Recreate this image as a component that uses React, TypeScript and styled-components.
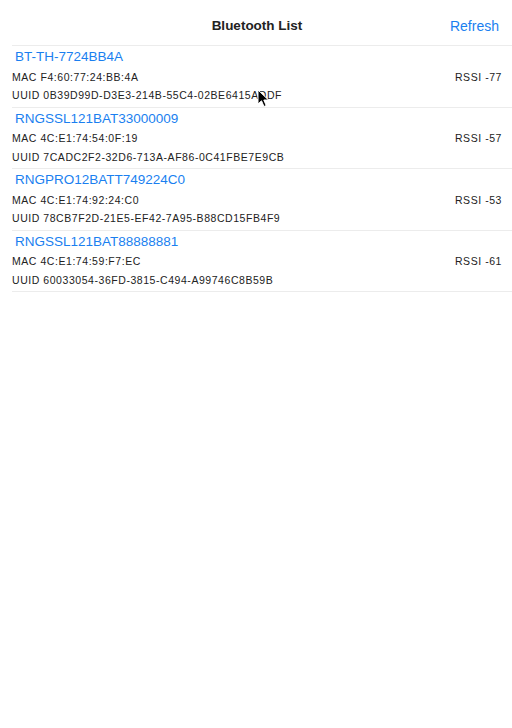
import React from "react";
import styled, { createGlobalStyle } from "styled-components";

const Global = createGlobalStyle`
  html, body { margin: 0; padding: 0; background: #fff; }
  body { font-family: "Liberation Sans", Arial, sans-serif; }
`;

const Page = styled.div`
  position: relative;
  width: 512px;
  height: 728px;
  background: #fff;
  overflow: hidden;
`;

const Header = styled.div`
  height: 46px;
  box-sizing: border-box;
  padding-top: 6px;
  display: flex;
  align-items: center;
  justify-content: center;
  position: relative;
  margin-left: 12px;
  border-bottom: 1px solid #ececec;
`;

const Title = styled.div`
  font-size: 13.5px;
  font-weight: bold;
  color: #222;
  margin-left: -10px;
`;

const RefreshBtn = styled.div`
  position: absolute;
  right: 13px;
  top: 6px;
  bottom: 0;
  display: flex;
  align-items: center;
  font-size: 14px;
  color: #1a7ff0;
`;

const List = styled.div`
  display: flex;
  flex-direction: column;
`;

const Row = styled.div`
  height: 60.5px;
  margin-left: 12px;
  border-bottom: 1px solid #ececec;
  display: flex;
  flex-direction: column;
  padding-right: 10px;
`;

const Name = styled.div`
  height: 21.5px;
  display: flex;
  align-items: center;
  padding-left: 3px;
  font-size: 13.5px;
  color: #1a7ff0;
`;

const Line = styled.div`
  height: 18.5px;
  display: flex;
  align-items: center;
  justify-content: space-between;
  font-size: 10.5px;
  letter-spacing: 0.55px;
  color: #222;
`;

const Cursor = styled.svg`
  position: absolute;
  left: 257px;
  top: 89px;
`;

const devices = [
  { name: "BT-TH-7724BB4A", mac: "F4:60:77:24:BB:4A", rssi: -77, uuid: "0B39D99D-D3E3-214B-55C4-02BE6415ADDF" },
  { name: "RNGSSL121BAT33000009", mac: "4C:E1:74:54:0F:19", rssi: -57, uuid: "7CADC2F2-32D6-713A-AF86-0C41FBE7E9CB" },
  { name: "RNGPRO12BATT749224C0", mac: "4C:E1:74:92:24:C0", rssi: -53, uuid: "78CB7F2D-21E5-EF42-7A95-B88CD15FB4F9" },
  { name: "RNGSSL121BAT88888881", mac: "4C:E1:74:59:F7:EC", rssi: -61, uuid: "60033054-36FD-3815-C494-A99746C8B59B" },
];

export default function App() {
  return (
    <Page>
      <Global />
      <Header>
        <Title>Bluetooth List</Title>
        <RefreshBtn>Refresh</RefreshBtn>
      </Header>
      <List>
        {devices.map((d) => (
          <Row key={d.name}>
            <Name>{d.name}</Name>
            <Line>
              <span>MAC {d.mac}</span>
              <span>RSSI {d.rssi}</span>
            </Line>
            <Line>
              <span>UUID {d.uuid}</span>
            </Line>
          </Row>
        ))}
      </List>
      <Cursor width="14" height="20" viewBox="0 0 14 20">
        <path d="M1 1 L1 15 L4.5 11.8 L7 17.5 L9.2 16.5 L6.8 11 L11.5 11 Z" fill="#000" stroke="#fff" strokeWidth="1" strokeLinejoin="round" />
      </Cursor>
    </Page>
  );
}
